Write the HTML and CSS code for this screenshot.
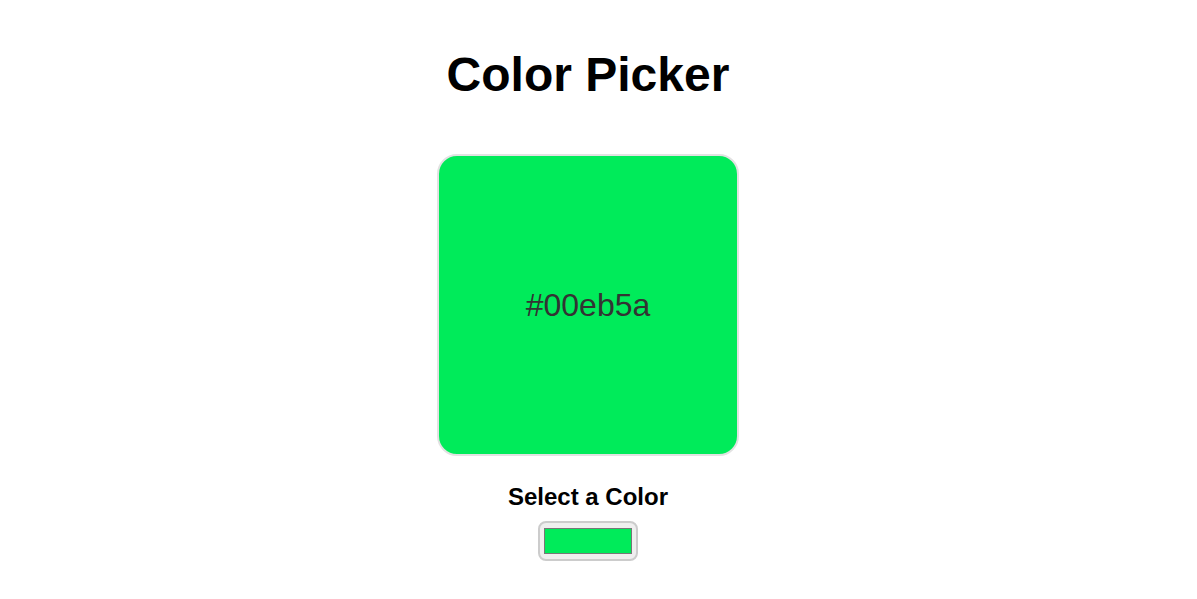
FILE: index.html
```html
<!DOCTYPE html>
<html lang="en">
<head>
<meta charset="utf-8">
<title>Color Picker</title>
<link rel="stylesheet" href="styles.css">
</head>
<body>
<main class="app">
  <h1 class="title">Color Picker</h1>
  <div class="preview" style="background-color:#00eb5a">
    <span class="hex">#00eb5a</span>
  </div>
  <h2 class="label">Select a Color</h2>
  <input class="picker" type="color" value="#00eb5a">
</main>
</body>
</html>
```
FILE: styles.css
```css
html, body {
  margin: 0;
  padding: 0;
  background: #ffffff;
}
body {
  font-family: "Liberation Sans", Arial, sans-serif;
  color: #000;
}
.app {
  display: flex;
  flex-direction: column;
  align-items: center;
  padding-top: 47px;
  padding-right: 21px;
}
.title {
  margin: 0;
  font-size: 48px;
  font-weight: bold;
  line-height: normal;
}
.preview {
  margin-top: 52px;
  width: 298px;
  height: 298px;
  border: 2px solid #e2e2e2;
  border-radius: 20px;
  display: flex;
  align-items: center;
  justify-content: center;
}
.hex {
  font-size: 32px;
  color: #333333;
}
.label {
  margin: 27px 0 0;
  font-size: 24px;
  font-weight: bold;
  line-height: normal;
}
.picker {
  margin-top: 10px;
  width: 100px;
  height: 40px;
  border: 2px solid #cccccc;
  border-radius: 8px;
  background-color: #efefef;
  cursor: pointer;
}
```
